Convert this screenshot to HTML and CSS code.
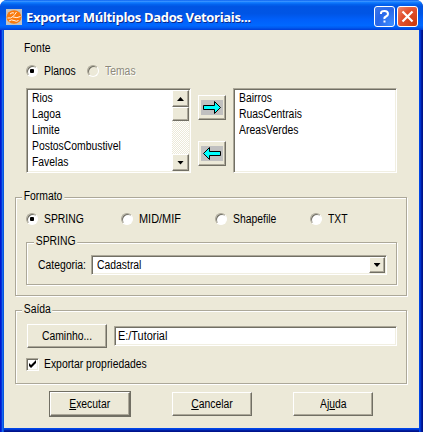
FILE: index.html
```html
<!DOCTYPE html>
<html lang="pt-BR">
<head>
<meta charset="utf-8">
<title>Exportar Múltiplos Dados Vetoriais...</title>
<link rel="stylesheet" href="styles.css">
</head>
<body>
<div class="window">
  <header class="titlebar">
    <svg class="app-icon" width="16" height="16" viewBox="0 0 16 16"><rect width="16" height="16" fill="#c4c2c0"/><ellipse cx="8" cy="8" rx="7.500" ry="6.800" fill="#fa7a0c"/><path d="M1.500 9Q5 9.500 7 7.500T10.500 3M4 5Q6 3 8 4M7 8Q11 9.500 14.500 7.500M3 12Q5.500 10 8 11.500T12.500 11.500" stroke="#fff" stroke-width=".9" fill="none"/></svg>
    <h1 class="title">Exportar Múltiplos Dados Vetoriais...</h1>
    <button class="cap help"><svg width="19" height="19" viewBox="0 0 19 19"><path d="M6 7V6Q6 4 9.500 4T13 7Q13 8.500 11 9.500T9.500 12M9.500 13.500V15.500" fill="none" stroke="#fff" stroke-width="2"/></svg></button>
    <button class="cap close"><svg width="19" height="19" viewBox="0 0 19 19"><path d="M4.500 4.500L14.500 14.500M14.500 4.500L4.500 14.500" stroke="#fff" stroke-width="2.200"/></svg></button>
  </header>
  <main class="client">
    <section class="source">
      <div class="label"><span>Fonte</span></div>
      <div class="radios first">
        <label class="radio on"><i></i><span>Planos</span></label>
        <label class="radio off"><i></i><span>Temas</span></label>
      </div>
      <div class="transfer">
        <div class="list sunken">
          <ul><li><span>Rios</span></li><li><span>Lagoa</span></li><li><span>Limite</span></li><li><span>PostosCombustivel</span></li><li><span>Favelas</span></li></ul>
          <div class="scroll"><b class="raised up"><i class="tri-up"></i></b><b class="raised thumb"></b><b class="track"></b><b class="raised down"><i class="tri-down"></i></b></div>
        </div>
        <div class="moves">
          <button class="raised move"><svg width="22" height="15" viewBox="0 0 22 15"><rect width="22" height="15" fill="#c0c0c0"/><path d="M2.500 5.500H13.500V1.500L19.500 7.500L13.500 13.500V9.500H2.500Z" fill="#0ff" stroke="#000"/></svg></button>
          <button class="raised move"><svg width="22" height="15" viewBox="0 0 22 15"><rect width="22" height="15" fill="#c0c0c0"/><path d="M19.500 5.500H8.500V1.500L2.500 7.500L8.500 13.500V9.500H19.500Z" fill="#0ff" stroke="#000"/></svg></button>
        </div>
        <div class="list sunken right">
          <ul><li><span>Bairros</span></li><li><span>RuasCentrais</span></li><li><span>AreasVerdes</span></li></ul>
        </div>
      </div>
    </section>
    <section class="group format">
      <h2 class="legend">Formato</h2>
      <div class="radios formats">
        <label class="radio on"><i></i><span>SPRING</span></label>
        <label class="radio"><i></i><span class="wide">MID/MIF</span></label>
        <label class="radio"><i></i><span>Shapefile</span></label>
        <label class="radio"><i></i><span>TXT</span></label>
      </div>
      <div class="group spring">
        <h3 class="legend">SPRING</h3>
        <div class="category"><span class="cat-label">Categoria:</span>
          <div class="combo sunken"><span>Cadastral</span><b class="raised drop"><i class="tri-down"></i></b></div>
        </div>
      </div>
    </section>
    <section class="group output">
      <h2 class="legend">Saída</h2>
      <div class="path-row"><button class="raised btn"><span>Caminho...</span></button><div class="field sunken"><span class="wide">E:/Tutorial</span></div></div>
      <label class="check"><i class="box sunken"><svg width="9" height="9" viewBox="0 0 9 9"><path d="M1 3V6L3 8L8 3V0L3 5Z" fill="#000"/></svg></i><span>Exportar propriedades</span></label>
    </section>
    <footer class="actions">
      <div class="default"><button class="raised btn"><span><u>E</u>xecutar</span></button></div>
      <button class="raised btn"><span><u>C</u>ancelar</span></button>
      <button class="raised btn"><span>Aj<u>u</u>da</span></button>
    </footer>
  </main>
</div>
</body>
</html>
```
FILE: styles.css
```css
* { box-sizing: border-box; }
body { margin: 0; background: #fff; overflow: hidden; font: 12px/16px "Liberation Sans", Arial, sans-serif; color: #000; }
h1, h2, h3, ul { margin: 0; padding: 0; font: inherit; list-style: none; }
i, b { display: block; flex: none; font-weight: normal; }
svg { display: block; flex: none; }
span { display: inline-block; white-space: nowrap; transform: scaleX(.865); transform-origin: 0 50%; }
.wide { transform: scaleX(.91); }
button { font: inherit; color: inherit; padding: 0; margin: 0; border-radius: 0; }
.window { width: 423px; height: 432px; background: linear-gradient(90deg, #0019cf 0 1px, #0831d9 1px 2px, #166aee 2px 3px, #0855dd 3px 4px, #0855dd 4px 419px, #0046e8 419px 420px, #0033d0 420px 421px, #001ea0 421px 422px, #00138c 422px); border-radius: 7px 7px 0 0; overflow: hidden; }
.titlebar { height: 30px; padding: 3px 5px 0 6px; display: flex; align-items: center; background: linear-gradient(#0058ee 0, #3f96ff 4%, #127dff 8%, #0262ee 15%, #0054e3 22%, #0055e5 45%, #005ffa 65%, #0068ff 85%, #005bf0 92%, #003dd7 100%); }
.title { flex: 1; margin-left: 4px; color: #fff; font: bold 13px/18px "Open Sans", "Noto Sans", sans-serif; letter-spacing: -.33px; white-space: nowrap; text-shadow: 1px 1px #0b2a8c; }
.cap { flex: none; width: 21px; height: 21px; border: 1px solid #fff; border-radius: 3px; margin-left: 2px; }
.help { background: radial-gradient(circle at 90% 90%, #3c8cff, #2866e8 60%, #3f78e8); }
.close { background: radial-gradient(circle at 90% 90%, #cf3b0c, #e2502e 60%, #ee8a70); }
.client { width: 415px; height: 398px; margin-left: 4px; padding: 10px 11px 0; background: #ece9d8; box-shadow: 0 1px #0046e8, 0 2px #0038d4, 0 3px #001ea0, 0 4px #00138c; }
.source { height: 157px; padding-left: 11px; }
.label { height: 16px; margin-left: -2px; }
.radios { display: flex; align-items: center; height: 16px; }
.first { margin-top: 7px; }
.radio { display: flex; align-items: center; width: 61px; }
.radio i { width: 12px; height: 12px; border-radius: 50%; border: 1px solid; border-color: #aca899 #fff #fff #aca899; background: #fff; box-shadow: inset 1px 1px #716f64; margin-right: 6px; }
.radio.on i { background: radial-gradient(circle, #000 0 2px, #fff 2.500px); }
.radio.off i { background: #ece9d8; }
.radio.off { color: #8d897b; text-shadow: 1px 1px #fff; }
.transfer { display: flex; margin-top: 9px; }
.sunken { background: #fff; border: 1px solid; border-color: #aca899 #fff #fff #aca899; box-shadow: inset 1px 1px #716f64, inset -1px -1px #f1efe2; }
.raised { background: #ece9d8; border: 1px solid; border-color: #fff #716f64 #716f64 #fff; box-shadow: inset -1px -1px #aca899; }
.list { width: 165px; height: 85px; padding: 1px; display: flex; justify-content: space-between; }
.list ul { padding-left: 4px; }
.list.right { width: 164px; }
.list li { height: 16px; }
.scroll { width: 17px; display: flex; flex-direction: column; }
.scroll b { display: flex; align-items: center; justify-content: center; }
.up, .down { height: 17px; }
.thumb { height: 14px; }
.track { flex: 1; background: repeating-conic-gradient(#fff 0 25%, #ece9d8 0 50%) 0 0 / 2px 2px; }
.tri-up, .tri-down { width: 7px; height: 4px; background: #000; clip-path: polygon(0 0, 100% 0, 50% 100%); }
.tri-up { transform: scaleY(-1); }
.moves { display: flex; flex-direction: column; gap: 21px; padding: 7px 7px 0; }
.move { width: 28px; height: 25px; padding: 4px 2px; }
.group { border: 1px solid #aca899; box-shadow: 1px 1px #fff, inset 1px 1px #fff; }
.legend { width: max-content; height: 16px; margin: -10px 0 0 6px; padding: 0 2px; background: #ece9d8; transform: scaleX(.865); transform-origin: 0 50%; }
.format { width: 392px; height: 99px; }
.formats { margin: 7px 0 0 10px; }
.formats .radio { width: 94.500px; }
.spring { width: 371px; height: 43px; margin: 15px 0 0 10px; }
.spring .legend { margin-left: 7px; }
.category { display: flex; align-items: center; margin: 6px 0 0 11px; }
.cat-label { width: 53px; }
.combo { width: 296px; height: 20px; padding: 1px; display: flex; justify-content: space-between; align-items: center; }
.combo > span { margin-left: 4px; }
.drop { width: 16px; height: 16px; display: flex; align-items: center; justify-content: center; }
.output { width: 392px; height: 74px; margin-top: 14px; }
.path-row { display: flex; align-items: center; margin: 7px 0 0 11px; }
.btn { width: 80px; height: 24px; }
.btn span { transform-origin: 50% 50%; }
.field { width: 283px; height: 20px; margin-left: 7px; padding: 1px 3px; }
.check { display: flex; align-items: center; margin: 8px 0 0 10px; }
.box { width: 13px; height: 13px; padding: 1px; margin-right: 5px; }
.actions { display: flex; align-items: center; margin: 7px 0 0 34px; }
.actions > .btn { margin-left: 41px; }
.default { border: 1px solid #716f64; }
u { text-underline-offset: 1px; }
```
